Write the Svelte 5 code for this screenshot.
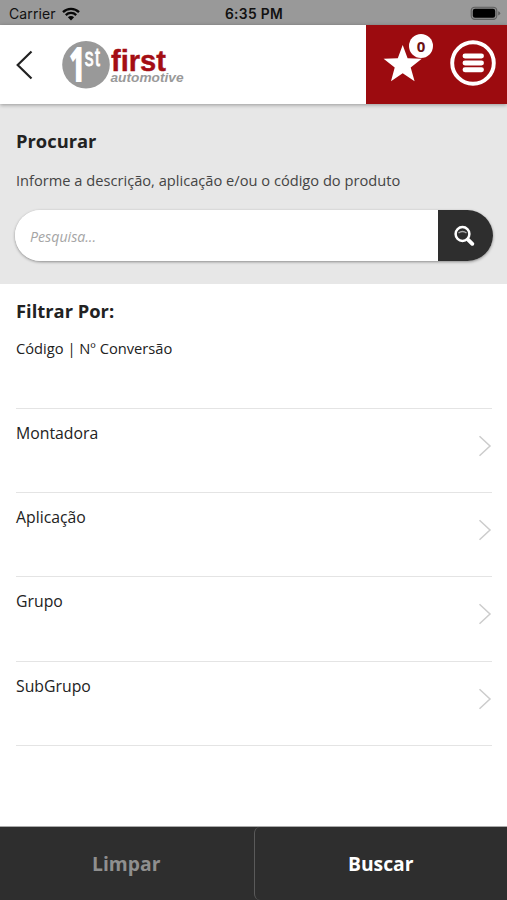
<script>
  const filters = ['Montadora', 'Aplicação', 'Grupo', 'SubGrupo'];
  let query = $state('');
  let favorites = $state(0);
</script>

<div class="screen">
  <div class="status">
    <div class="carrier">
      <span>Carrier</span>
      <svg width="18" height="14" viewBox="0 0 18 14">
        <g fill="none" stroke="#080808" stroke-width="2.3">
          <path d="M1 5.1a11.3 11.3 0 0 1 16 0" />
          <path d="M3.8 8.1a7.4 7.4 0 0 1 10.4 0" />
        </g>
        <path d="M5.9 10.2a4.4 4.4 0 0 1 6.2 0L9 13.4z" fill="#080808" />
      </svg>
    </div>
    <div class="time">6:35 PM</div>
    <div class="battery">
      <svg width="31" height="15" viewBox="0 0 31 15">
        <rect x="1.2" y="1.2" width="25.6" height="12.2" rx="3.6" fill="#8f8f8f" stroke="#5f5f5f" stroke-width="1.1" />
        <rect x="2.8" y="2.8" width="22.4" height="9" rx="2.2" fill="#000" />
        <path d="M28.2 5.2q2 .6 2 2.1t-2 2.1z" fill="#5f5f5f" />
      </svg>
    </div>
  </div>

  <header>
    <button class="back" aria-label="Voltar">
      <svg width="18" height="30" viewBox="0 0 18 30">
        <path d="M15.500 1.500L1.700 15L15.500 28.500" fill="none" stroke="#222" stroke-width="2.200" />
      </svg>
    </button>
    <svg class="logo" width="130" height="54" viewBox="58 38 130 54">
      <circle cx="86" cy="64.700" r="23.800" fill="#999" />
      <g fill="#fff" stroke="#fff">
        <text x="69.200" y="81.300" font-family="Open Sans, sans-serif" font-weight="bold" font-size="46" stroke-width="2" textLength="16" lengthAdjust="spacingAndGlyphs">1</text>
        <text x="84.800" y="66.300" font-family="Liberation Sans, Arial, sans-serif" font-size="25" stroke-width=".9" letter-spacing="2" textLength="16.500" lengthAdjust="spacingAndGlyphs">st</text>
      </g>
      <text x="111" y="71.300" fill="#a40e14" stroke="#a40e14" stroke-width=".4" font-family="Liberation Sans, Arial, sans-serif" font-weight="bold" font-size="30" textLength="55" lengthAdjust="spacingAndGlyphs">first</text>
      <text x="110.500" y="82.300" fill="#999" font-family="Liberation Sans, Arial, sans-serif" font-weight="bold" font-style="italic" font-size="12.500" textLength="73" lengthAdjust="spacingAndGlyphs">automotive</text>
    </svg>
    <div class="actions">
      <button class="fav" aria-label="Favoritos">
        <svg width="40" height="38" viewBox="0 0 40 38">
          <path d="M19.700 0L24.600 13.200L38.800 13.700L27.700 22.400L31.600 36.200L19.700 28.300L8 36.200L11.700 22.400L.6 13.700L14.800 13.200Z" fill="#fff" />
        </svg>
        <span class="badge">{favorites}</span>
      </button>
      <button class="menu" aria-label="Menu">
        <svg width="46" height="46" viewBox="0 0 46 46">
          <circle cx="23" cy="23" r="20.800" fill="none" stroke="#fff" stroke-width="3.900" />
          <g stroke="#fff" stroke-width="4.900" stroke-linecap="round">
            <path d="M15 16H31.500M15 23H31.500M15 29.800H31.500" />
          </g>
        </svg>
      </button>
    </div>
  </header>

  <section class="search">
    <h2>Procurar</h2>
    <p>Informe a descrição, aplicação e/ou o código do produto</p>
    <div class="box">
      <input placeholder="Pesquisa..." bind:value={query} />
      <button aria-label="Pesquisar">
        <svg width="22" height="22" viewBox="0 0 22 22">
          <circle cx="8.500" cy="9" r="6.900" fill="none" stroke="#fff" stroke-width="2.500" />
          <path d="M4.500 8Q8.500 5 12.500 8" fill="none" stroke="#aaa" stroke-width="1.400" />
          <path d="M14 14.700L18.300 18.800" stroke="#fff" stroke-width="3.900" stroke-linecap="round" />
        </svg>
      </button>
    </div>
  </section>

  <main>
    <h2>Filtrar Por:</h2>
    <div class="code">Código | Nº Conversão</div>
    {#each filters as name}
      <div class="row">
        <span>{name}</span>
        <svg width="14" height="22" viewBox="0 0 14 22">
          <path d="M1.500 1.300L12 11L1.500 20.700" fill="none" stroke="#ccc" stroke-width="1.500" />
        </svg>
      </div>
    {/each}
  </main>

  <footer>
    <button class="clear">Limpar</button>
    <button class="go">Buscar</button>
  </footer>
</div>

<style>
  :global(body) { margin: 0; }
  .screen {
    width: 507px;
    height: 900px;
    display: flex;
    flex-direction: column;
    overflow: hidden;
    background: #fff;
    color: #222;
    font-family: 'Open Sans', 'Noto Sans', sans-serif;
  }
  button { border: 0; padding: 0; background: none; font: inherit; color: inherit; }
  svg { display: block; flex: none; }
  .status {
    height: 25px;
    flex: none;
    display: grid;
    grid-template-columns: 1fr auto 1fr;
    align-items: center;
    background: #999;
    color: #111;
    font-family: Inter, sans-serif;
    font-size: 14px;
    line-height: 25px;
  }
  .carrier { display: flex; align-items: center; gap: 6px; padding: 0 0 0 9px; }
  .carrier span { letter-spacing: .1px; }
  .time { font-weight: 600; padding: 2px 0 0 1px; font-size: 13.800px; letter-spacing: .350px; white-space: nowrap; }
  .battery { display: flex; justify-content: flex-end; padding-right: 6px; }
  header {
    height: 79px;
    flex: none;
    display: flex;
    position: relative;
    background: #fff;
    box-shadow: 0 1px 4px rgba(0, 0, 0, .35);
  }
  .back { padding: 9px 0 9px 16px; width: 58px; }
  .logo { margin-top: 13px; overflow: visible; }
  .actions {
    width: 141px;
    margin-left: auto;
    display: flex;
    background: #9c0b0f;
  }
  .fav { position: relative; width: 84px; padding: 20px 0 0 17px; display: flex; }
  .badge {
    position: absolute;
    left: 43px;
    top: 9px;
    width: 24px;
    height: 24px;
    border-radius: 50%;
    background: #fff;
    color: #6b1013;
    font-size: 15px;
    font-weight: 700;
    line-height: 24px;
    text-align: center;
  }
  .menu { padding: 15px 0 0; display: flex; }
  .search {
    height: 180px;
    flex: none;
    box-sizing: border-box;
    padding: 24px 14px 0 15px;
    background: #e7e7e7;
  }
  h2 { margin: 0 0 0 1px; font-size: 18.350px; font-weight: 700; line-height: 25px; }
  p { margin: 17px 0 0 1px; font-size: 14.650px; line-height: 20px; color: #444; white-space: nowrap; }
  .box {
    height: 51px;
    margin-top: 20px;
    display: flex;
    overflow: hidden;
    border-radius: 26px;
    background: #fff;
    box-shadow: 0 1px 3px rgba(0, 0, 0, .4);
  }
  input {
    flex: 1;
    min-width: 0;
    border: 0;
    outline: 0;
    padding: 2px 15px 0;
    background: #fff;
    font: italic 14.200px 'Open Sans', sans-serif;
  }
  input::placeholder { color: #a5a5a5; opacity: 1; }
  .box button { width: 55px; padding-left: 16px; background: #2e2e2e; }
  main { flex: 1; padding: 14px 15px 0; font-size: 15.800px; }
  .code {
    height: 86px;
    box-sizing: border-box;
    margin-left: 1px;
    padding-top: 14px;
    font-size: 14.700px;
    line-height: 22px;
    border-bottom: 1px solid #e4e4e4;
  }
  .row {
    height: 84.200px;
    box-sizing: border-box;
    margin-left: 1px;
    padding-top: 13px;
    display: flex;
    justify-content: space-between;
    line-height: 22px;
    border-bottom: 1px solid #e4e4e4;
  }
  .row svg { margin: 13px 0 0; }
  footer {
    height: 73px;
    flex: none;
    display: flex;
    background: #2e2e2e;
    border-top: 1px solid #aaa;
    font-size: 19.300px;
    font-weight: 700;
  }
  footer button { flex: 1; }
  .clear { color: #8f8f8f; }
  .go { color: #fff; border-left: 1px solid #5a5a5a; border-radius: 6px 0 0 6px; margin-left: 1px; }
</style>
